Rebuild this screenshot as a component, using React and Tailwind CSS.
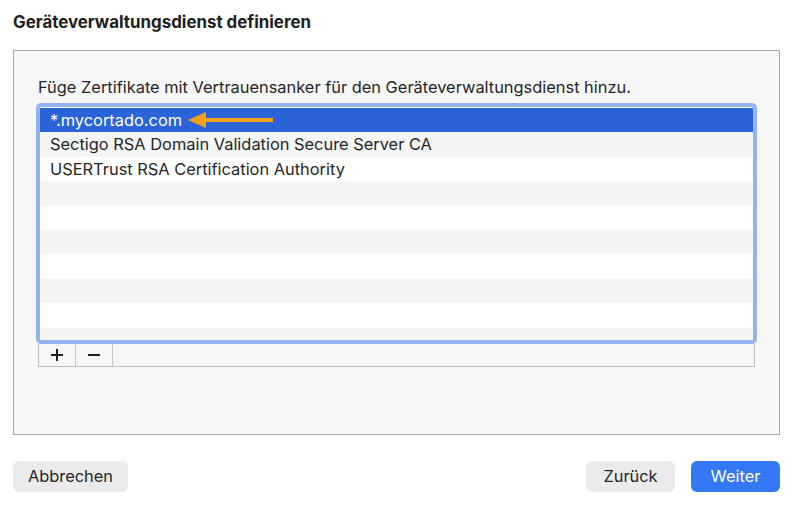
const rows = [
  "*.mycortado.com",
  "Sectigo RSA Domain Validation Secure Server CA",
  "USERTrust RSA Certification Authority",
  "",
  "",
  "",
  "",
  "",
  "",
  "",
];

const App = () => {
  return (
    <div
      className="w-[800px] h-[508px] bg-white flex flex-col pl-[13px] pr-[20px] text-[#262626]"
      style={{ fontFamily: "Inter, 'Noto Sans', sans-serif" }}
    >
      {/* Title */}
      <h1 className="mt-[12px] h-[20px] leading-[20px] text-[16.9px] font-bold text-[#1f1f1f]">
        Geräteverwaltungsdienst definieren
      </h1>

      {/* Content box */}
      <div className="mt-[18px] h-[385px] border border-[#a6a6a6] bg-[#f7f7f7] pl-[24px] pr-[24px] pt-[26px]">
        <p className="h-[20px] leading-[20px] text-[16.4px]">
          Füge Zertifikate mit Vertrauensanker für den Geräteverwaltungsdienst hinzu.
        </p>

        {/* List */}
        <div className="mt-[8px] w-[717px]">
          <div className="relative h-[237px] border-2 border-[#94b3f2] ring-2 ring-[#94b3f2] rounded-[3px] bg-white overflow-hidden">
            <div className="pt-[1px]">
              {rows.map((row, i) => (
                <div
                  key={i}
                  className={
                    i === 0
                      ? "h-[24.4px] leading-[24px] px-[10px] text-[16.4px] bg-[#2b63d9] text-white"
                      : i % 2 === 1
                      ? "h-[24.4px] leading-[24px] px-[10px] text-[16.4px] bg-[#f4f5f5]"
                      : "h-[24.4px] leading-[24px] px-[10px] text-[16.4px] bg-white"
                  }
                >
                  {row}
                </div>
              ))}
            </div>

            {/* Orange arrow pointing at selected row */}
            <svg
              className="absolute left-[148px] top-[2px]"
              width="90"
              height="22"
              viewBox="0 0 90 22"
            >
              <polygon points="0,11 18,3 18,19" fill="#f7a01c" />
              <rect x="16" y="9" width="69" height="4" fill="#f7a01c" />
            </svg>
          </div>

          {/* +/- bar */}
          <div className="mt-[2px] h-[23px] flex border border-t-0 border-[#bdbdbd] bg-[#f6f6f6]">
            <div className="w-[37px] flex items-center justify-center border-r border-[#c8c8c8]">
              <svg width="14" height="14" viewBox="0 0 14 14">
                <path d="M7 1v12M1 7h12" stroke="#1f1f1f" strokeWidth="2" />
              </svg>
            </div>
            <div className="w-[37px] flex items-center justify-center border-r border-[#c8c8c8]">
              <svg width="14" height="14" viewBox="0 0 14 14">
                <path d="M1 7h12" stroke="#1f1f1f" strokeWidth="2" />
              </svg>
            </div>
          </div>
        </div>
      </div>

      {/* Buttons */}
      <div className="mt-[26px] flex items-center">
        <button className="w-[115px] h-[31px] rounded-[6px] bg-[#ebebeb] text-[16.4px] text-[#262626]">
          Abbrechen
        </button>
        <div className="flex-1" />
        <button className="w-[89px] h-[31px] rounded-[6px] bg-[#ebebeb] text-[16.4px] text-[#262626]">
          Zurück
        </button>
        <button className="ml-[16px] w-[89px] h-[31px] rounded-[6px] bg-[#3478f6] text-[16.4px] text-white">
          Weiter
        </button>
      </div>
    </div>
  );
};

export default App;
